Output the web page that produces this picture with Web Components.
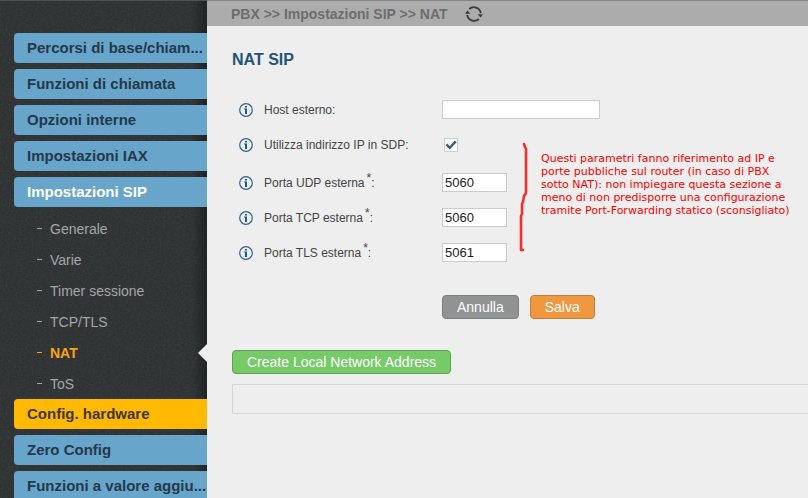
<!DOCTYPE html>
<html lang="it">
<head>
<meta charset="utf-8">
<meta name="viewport" content="width=device-width, initial-scale=1">
<title>NAT</title>
<style>
html, body { height: 100%; margin: 0; }
body { font-family: "Liberation Sans", Arial, sans-serif; background: #eee; color: #444; overflow: hidden; }
</style>
</head>
<body>
<pbx-app>
  <pbx-sidebar slot="nav">
    <nav-item>Percorsi di base/chiam...</nav-item>
    <nav-item>Funzioni di chiamata</nav-item>
    <nav-item>Opzioni interne</nav-item>
    <nav-item>Impostazioni IAX</nav-item>
    <nav-item open>Impostazioni SIP</nav-item>
    <nav-submenu>
      <nav-subitem>Generale</nav-subitem>
      <nav-subitem>Varie</nav-subitem>
      <nav-subitem>Timer sessione</nav-subitem>
      <nav-subitem>TCP/TLS</nav-subitem>
      <nav-subitem current>NAT</nav-subitem>
      <nav-subitem>ToS</nav-subitem>
    </nav-submenu>
    <nav-item highlight>Config. hardware</nav-item>
    <nav-item>Zero Config</nav-item>
    <nav-item>Funzioni a valore aggiu...</nav-item>
  </pbx-sidebar>
  <pbx-breadcrumb slot="top">PBX &gt;&gt; Impostazioni SIP &gt;&gt; NAT</pbx-breadcrumb>
  <nat-form>
    <form-field label="Host esterno" wide></form-field>
    <form-field slot="ports" label="Utilizza indirizzo IP in SDP" type="checkbox"></form-field>
    <form-field slot="ports" label="Porta UDP esterna" required value="5060"></form-field>
    <form-field slot="ports" label="Porta TCP esterna" required value="5060"></form-field>
    <form-field slot="ports" label="Porta TLS esterna" required value="5061"></form-field>
    <margin-note slot="note">Questi parametri fanno riferimento ad IP e<br>porte pubbliche sul router (in caso di PBX<br>sotto NAT): non impiegare questa sezione a<br>meno di non predisporre una configurazione<br>tramite Port-Forwarding statico (sconsigliato)</margin-note>
    <action-button slot="actions" tone="grey">Annulla</action-button>
    <action-button slot="actions" tone="orange">Salva</action-button>
  </nat-form>
  <address-list></address-list>
</pbx-app>
<script>
const define = (name, html, setup) => customElements.define(name, class extends HTMLElement {
  connectedCallback() {
    if (this.shadowRoot) return;
    const t = document.createElement('template');
    t.innerHTML = html;
    this.attachShadow({ mode: 'open' }).append(t.content.cloneNode(true));
    if (setup) setup(this, this.shadowRoot);
  }
});

define('pbx-app', `
<style>
:host { display: grid; grid-template-columns: 207px minmax(0, 1fr); height: 100vh; overflow: hidden; }
.main { min-width: 0; }
.content { padding: 24px 0 24px 25px; }
</style>
<slot name="nav"></slot>
<div class="main"><slot name="top"></slot><main class="content"><slot></slot></main></div>`);

define('pbx-sidebar', `
<style>
:host { display: block; min-width: 0; overflow: hidden; border-top: 1px solid #505354;
  background-color: #2e3233;
  background-image: linear-gradient(90deg, transparent 192px, rgba(10,14,16,.45)),
    url("data:image/svg+xml,%3Csvg xmlns='http://www.w3.org/2000/svg' width='128' height='128'%3E%3Cfilter id='n'%3E%3CfeTurbulence type='fractalNoise' baseFrequency='.5' numOctaves='2' stitchTiles='stitch'/%3E%3CfeColorMatrix values='0 0 0 0 .7 0 0 0 0 .72 0 0 0 0 .7 .5 .5 0 0 -.38'/%3E%3C/filter%3E%3Crect width='128' height='128' filter='url(%23n)' opacity='.14'/%3E%3C/svg%3E"); }
nav { display: flex; flex-direction: column; gap: 6px; padding: 32px 0 0 14px; }
</style>
<nav aria-label="Menu"><slot></slot></nav>`);

define('nav-item', `
<style>
:host { display: block; }
a { display: block; height: 30px; line-height: 30px; padding-left: 13px; border-radius: 4px 0 0 4px;
  background: #68a5ca; color: #24384a; font-size: 15px; font-weight: bold; text-decoration: none; white-space: nowrap; }
:host([open]) a { color: #fff; }
:host([highlight]) a { background: #ffb900; color: #40352a; }
</style>
<a href="#"><slot></slot></a>`);

define('nav-submenu', `<style>:host { display: block; margin-bottom: -6px; }</style><slot></slot>`);

define('nav-subitem', `
<style>
:host { display: flex; align-items: center; justify-content: space-between; height: 31px; color: #a5a7a8; font-size: 14px; }
a { display: flex; align-items: center; gap: 8px; padding-left: 23px; color: inherit; text-decoration: none; }
a::before { content: ""; width: 5px; height: 1px; background: currentColor; }
:host([current]) { color: #fca311; font-weight: bold; }
svg { display: none; }
:host([current]) svg { display: block; }
</style>
<a href="#"><slot></slot></a>
<svg width="9" height="18" viewBox="0 0 9 18" aria-hidden="true"><path d="M9 0 0 9l9 9z" fill="#eee"/></svg>`);

define('pbx-breadcrumb', `
<style>
:host { display: flex; align-items: center; gap: 17px; height: 25px; padding-left: 24px; border-top: 1px solid #858585;
  background: #acacac; color: #6d6d6d; font-size: 14px; font-weight: bold; }
button { display: flex; padding: 0; border: 0; background: none; color: #3c3c3c; }
</style>
<span><slot></slot></span>
<button type="button" aria-label="Aggiorna"><svg width="18" height="18" viewBox="0 0 18 18">
<g fill="none" stroke="currentColor" stroke-width="1.9"><path d="M4.2 4A7 7 0 0 1 15.8 8.2"/><path d="M13.8 14A7 7 0 0 1 2.2 9.8"/></g>
<path d="M0 8.8h5.4L2.4 5.4zM12.6 9.2H18l-2.4 3.4z" fill="currentColor"/></svg></button>`);

define('nat-form', `
<style>
:host { display: block; }
h1 { margin: 0 0 22px; font-size: 16px; line-height: 20px; color: #24527a; }
.group { display: flex; align-items: flex-start; }
.actions { display: flex; gap: 11px; padding: 25px 0 0 210px; }
</style>
<h1>NAT SIP</h1>
<form>
<slot></slot>
<div class="group"><div><slot name="ports"></slot></div><slot name="note"></slot></div>
<div class="actions"><slot name="actions"></slot></div>
</form>`);

define('form-field', `
<style>
:host { display: flex; align-items: center; height: 35px; padding-left: 7px; font-size: 12px; color: #444; }
:host([type="checkbox"]) { padding-bottom: 3px; }
svg { flex: none; margin-right: 11px; }
label { width: 178px; white-space: nowrap; }
sup { margin-left: 2px; font-size: 12px; line-height: 0; vertical-align: 5px; }
input { box-sizing: border-box; margin: 0; border: 1px solid #ccc; background: #fff; }
input[type="text"] { width: 65px; height: 19px; padding: 0 2px; color: #222; font: 13px "Liberation Sans", Arial, sans-serif; }
:host([wide]) input { width: 158px; }
input[type="checkbox"] { appearance: none; width: 14px; height: 14px; margin-left: 2px; border-color: #c4d0d8;
  background: #fff url("data:image/svg+xml,%3Csvg xmlns='http://www.w3.org/2000/svg' viewBox='0 0 12 12'%3E%3Cpath d='M1.5 5.4 4.7 8.8 10.8 2.4' fill='none' stroke='%233d5a73' stroke-width='2.3'/%3E%3C/svg%3E") center / 12px no-repeat; }
</style>
<svg width="14" height="14" viewBox="0 0 14 14" aria-hidden="true"><circle cx="7" cy="7" r="6.3" fill="#e6f1f8" stroke="#3a5f80" stroke-width="1.2"/><path d="M6 3h2v1.6H6zM5 5.6h3V11H6V6.6H5z" fill="#2d5275"/></svg>
<label for="f"></label><input id="f" type="text">`, (el, root) => {
  const label = root.querySelector('label'), input = root.querySelector('input');
  label.innerHTML = el.getAttribute('label') + (el.hasAttribute('required') ? '<sup>*</sup>:' : ':');
  if (el.getAttribute('type') === 'checkbox') { input.type = 'checkbox'; input.checked = true; }
  else input.value = el.getAttribute('value') || '';
});

define('margin-note', `
<style>
:host { display: flex; align-items: flex-start; gap: 13px; padding: 15px 0 0 12px; color: #f00; }
svg { flex: none; }
p { margin: 0; padding-top: 10px; font: 11px/13px "DejaVu Sans", Verdana, sans-serif; white-space: nowrap; }
</style>
<svg width="9" height="110" viewBox="0 0 9 110" aria-hidden="true"><path d="M5 2l1 3 1 2v44l-2 3-1 6-1 2v10l-1 2v34h2" fill="none" stroke="#f92c2c" stroke-width="2.6" stroke-linecap="round" stroke-linejoin="round"/></svg>
<p><slot></slot></p>`);

define('action-button', `
<style>
:host { display: block; }
button { display: block; height: 24px; padding: 0 14px; border: 1px solid #7d8080; border-radius: 4px; background: #8f9393;
  color: #fff; font: 14px/22px "Liberation Sans", Arial, sans-serif; }
:host([tone="orange"]) button { background: #f0983f; border-color: #c07f42; }
:host([tone="green"]) button { background: #76ca68; border-color: #5ba552; }
</style>
<button type="button"><slot></slot></button>`);

define('address-list', `
<style>
:host { display: block; padding-top: 31px; }
action-button { width: max-content; }
.panel { height: 28px; margin-top: 10px; border: 1px solid #d3d3d3; border-right: 0; border-radius: 2px 0 0 2px; }
</style>
<action-button tone="green">Create Local Network Address</action-button>
<div class="panel"></div>`);
</script>
</body>
</html>
